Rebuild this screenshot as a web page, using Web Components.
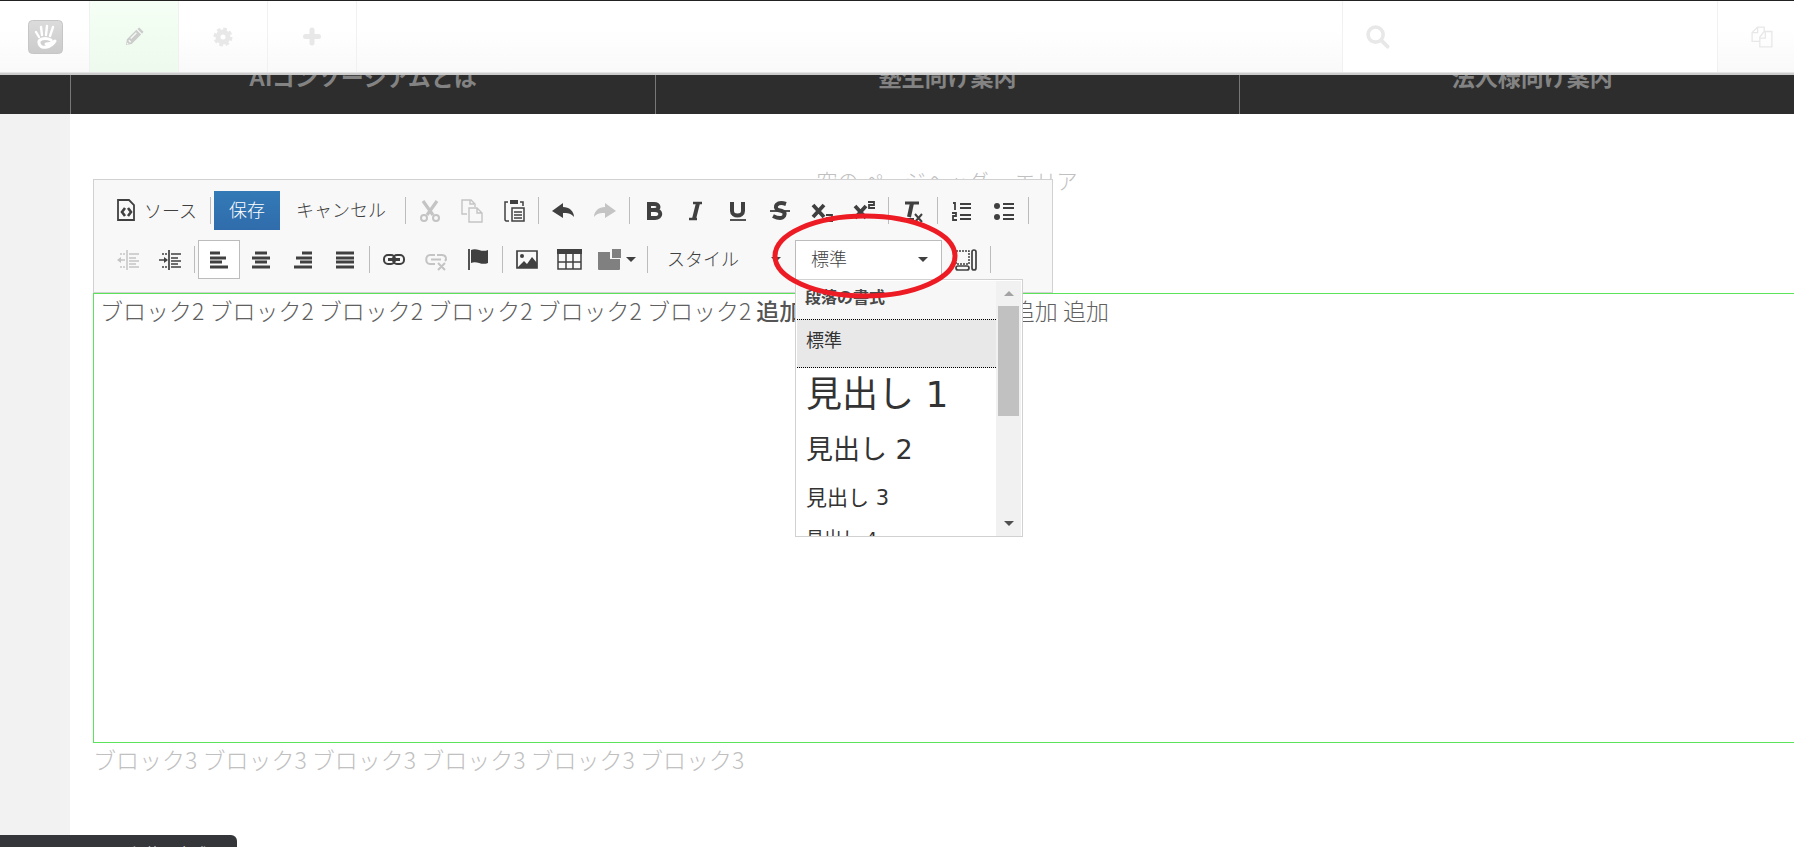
<!DOCTYPE html>
<html lang="ja">

<head>
    <meta charset="utf-8">
    <title>ページ編集</title>
    <meta name="viewport" content="width=device-width, initial-scale=1">
    <style>
        body {
            margin: 0;
            min-height: 100vh;
            overflow: hidden;
            background: linear-gradient(90deg, #f2f2f2 70px, #fff 70px);
            font: 18px/24px "Liberation Sans", "Noto Sans CJK JP", sans-serif;
            color: #484848;
        }
    </style>
</head>

<body>
    <script>
        const icons = {
            pencil: `<path fill="currentColor" d="M1 19l1-6L12 3l5 5L7 18zM13 2l2-1.500 4.500 4.500L18 7z"/><path d="M4 14l2 2M6 12l6-6" stroke="#f1fbf0" stroke-width="1.500"/><path d="M2 16l2 2-2 .5z" fill="#f1fbf0"/>`,
            gear: `<circle cx="10" cy="10" r="5" fill="none" stroke="currentColor" stroke-width="5"/><circle cx="10" cy="10" r="8" fill="none" stroke="currentColor" stroke-width="3" stroke-dasharray="3.600 2.683"/>`,
            plus: `<path d="M10 3v13M3.500 9.500h13" stroke="currentColor" stroke-width="5" stroke-linecap="round"/>`,
            search: `<circle cx="8" cy="8" r="6.300" fill="none" stroke="currentColor" stroke-width="3"/><path d="M13 13l5 5" stroke="currentColor" stroke-width="3.200" stroke-linecap="round"/>`,
            pages: `<path fill="none" stroke="currentColor" stroke-width="1.200" d="M8 14H1V6l5-5h6v4M1 6h5V1M8 19V10l4-5h7v14zM8 11h5V5"/>`,
            source: `<path fill="none" stroke="currentColor" stroke-width="1.800" d="M2 1h11l5 5v15H2z"/><path fill="none" stroke="currentColor" stroke-width="2.600" d="M9 9l-3 4 3 4M12 9l3 4-3 4"/>`,
            cut: `<path stroke="currentColor" stroke-width="3.200" d="M4 1l10 14M18 1L8 15"/><g fill="none" stroke="currentColor" stroke-width="2"><circle cx="5" cy="18" r="3"/><circle cx="17" cy="18" r="3"/></g>`,
            copy: `<path fill="none" stroke="currentColor" stroke-width="1.400" d="M6 14H1V0h9l4 4v3M9 0v4h4M8 8h8l5 5v9H8zM16 8v5h5"/>`,
            paste: `<path d="M7 0h8v4H7z" fill="currentColor"/><path fill="none" stroke="currentColor" stroke-width="1.500" d="M5 2H2v18l1 1h3M17 2h3v4M9 8h12v13H9z"/><path d="M11 12h8M11 15h8M11 18h8" stroke="currentColor" stroke-width="1.300"/>`,
            undo: `<path fill="currentColor" d="M0 11L11 3v4c6 0 11 4 11 10-3-4-7-4-11-4v5z"/>`,
            redo: `<path fill="currentColor" d="M22 11L11 3v4C5 7 0 11 0 17c3-4 7-4 11-4v5z"/>`,
            bold: `<path fill="none" stroke="currentColor" stroke-width="4" d="M6 4h5c6 0 6 6 0 6H7h5c7 0 7 8 0 8H6zV4"/>`,
            italic: `<path fill="none" stroke="currentColor" stroke-width="2.500" d="M8 3h9M4 19h8"/><path stroke="currentColor" stroke-width="4" d="M13 3L9 19"/>`,
            underline: `<path fill="none" stroke="currentColor" stroke-width="4" d="M5 2v9c0 6 11 6 11 0V2"/><path d="M3 20h16" stroke="currentColor" stroke-width="1.800"/>`,
            strike: `<path fill="none" stroke="currentColor" stroke-width="4" d="M17 4C8 1 4 7 9 10c5 1 8 2 6 6-2 3-7 2-11 0"/><path d="M1 11h20" stroke="currentColor" stroke-width="1.800"/>`,
            sub: `<path stroke="currentColor" stroke-width="3.800" d="M2 5l11 12M13 5L2 17"/><path fill="none" stroke="currentColor" stroke-width="1.800" d="M15 15h6v3h-5v3h6"/>`,
            sup: `<path stroke="currentColor" stroke-width="3.800" d="M2 6l11 12M13 6L2 18"/><path fill="none" stroke="currentColor" stroke-width="1.800" d="M15 2h6v3h-5v3h6"/>`,
            clear: `<path d="M3 3h14" stroke="currentColor" stroke-width="3"/><path d="M10 3L7 17" stroke="currentColor" stroke-width="4"/><path d="M2 19h10M13 14l7 8M20 14l-7 8" stroke="currentColor" stroke-width="2"/>`,
            ol: `<path fill="none" stroke="currentColor" stroke-width="1.800" d="M2 3h2v7M1 13h4v3H2v4h4M9 4h11M9 8h11M9 15h11M9 19h11"/>`,
            ul: `<circle cx="4" cy="6" r="3" fill="currentColor"/><circle cx="4" cy="17" r="3" fill="currentColor"/><path stroke="currentColor" stroke-width="1.800" d="M10 4h11M10 8h11M10 15h11M10 19h11"/>`,
            outdent: `<path stroke="currentColor" stroke-width="1.500" d="M10 1v20M12 5h10M12 9h7M12 12h10M12 15h7M12 18h10M2 11h6"/><path stroke="currentColor" stroke-width="1.500" stroke-dasharray="2 1" d="M3 5h6M3 18h6"/><path d="M0 11l4-3v6z" fill="currentColor"/>`,
            indent: `<path stroke="currentColor" stroke-width="1.700" d="M10 1v20M12 5h10M12 9h7M12 12h10M12 15h7M12 18h10M0 11h6"/><path stroke="currentColor" stroke-width="1.500" stroke-dasharray="2 1" d="M3 5h6M3 18h6"/><path d="M9 11L5 8v6z" fill="currentColor"/>`,
            left: `<path stroke="currentColor" stroke-width="3" d="M2 4h10M2 9h16M2 13h12M2 18h18"/>`,
            center: `<path stroke="currentColor" stroke-width="3" d="M5 4h12M2 9h18M5 13h12M2 18h18"/>`,
            right: `<path stroke="currentColor" stroke-width="3" d="M10 4h10M4 9h16M8 13h12M2 18h18"/>`,
            justify: `<path stroke="currentColor" stroke-width="3" d="M2 4h18M2 9h18M2 13h18M2 18h18"/>`,
            link: `<g fill="none" stroke="currentColor" stroke-width="2"><rect x="1" y="6" width="11" height="9" rx="4"/><rect x="10" y="6" width="11" height="9" rx="4"/></g><path d="M5 10.500h12" stroke="currentColor" stroke-width="3"/>`,
            unlink: `<path fill="none" stroke="currentColor" stroke-width="2" d="M10 6H5c-5 0-5 9 0 9h5M12 6h5c4 0 5 4 3 6M6 10.500h10M13 14l7 7M20 14l-7 7"/>`,
            flag: `<path d="M2 0v21" stroke="currentColor" stroke-width="1.800"/><path fill="currentColor" d="M4 1c6-3 10 3 17 0v13c-7 3-11-3-17 0z"/>`,
            image: `<path fill="none" stroke="currentColor" stroke-width="1.700" d="M1 2h20v17H1z"/><circle cx="6" cy="7" r="2" fill="currentColor"/><path fill="currentColor" d="M2 18l6-6 3 3 5-7 5 6v5H2z"/>`,
            table: `<path fill="none" stroke="currentColor" stroke-width="1.500" d="M0 1h23v19H0zM0 13h23M8 5v15M15 5v15"/><path d="M-1 0h25v5H-1z" fill="currentColor"/>`,
            blocks: `<path fill="#808080" d="M0 3h12v7h10v10q0 1-1 1H1q-1 0-1-1zM14 0h9v9h-9z"/>`,
            area: `<path fill="none" stroke="currentColor" stroke-width="1.500" stroke-dasharray="2 1" d="M1 2h13v13H1z"/><g fill="none" stroke="currentColor" stroke-width="1.700"><rect x="17" y="1" width="4" height="20" rx="2"/><rect x="1" y="17" width="13" height="4" rx="2"/></g>`
        };
        const arrow = `<svg class="arrow" width="10" height="5" viewBox="0 0 10 5" aria-hidden="true"><path fill="currentColor" d="M0 0h10L5 5z"/></svg>`;

        class BaseElement extends HTMLElement {
            connectedCallback() {
                if (this.shadowRoot) return;
                this.attachShadow({ mode: "open" }).innerHTML = this.render();
            }
        }
        const define = (name, render) => customElements.define(name, class extends BaseElement {
            render() { return render(this); }
        });

        // <ui-icon name="cut" size="22">
        define("ui-icon", el => {
            let size = el.getAttribute("size") || 22;
            let box = el.getAttribute("box") || 22;
            return `<style>:host{display:inline-flex;flex:none}svg{overflow:visible}</style>
                <svg width="${size}" height="${size}" viewBox="0 0 ${box} ${box}" aria-hidden="true">${icons[el.getAttribute("name")]}</svg>`;
        });

        define("tool-button", el => `
            <style>
                :host { display: block }
                button {
                    display: flex; align-items: center; justify-content: center; gap: 6px;
                    box-sizing: border-box; min-width: 42px; height: 39px; padding: 0;
                    border: 1px solid transparent; background: none; color: inherit; font: inherit; white-space: nowrap;
                }
                :host([text]) button { padding: 0 15px 4px }
                :host([source]) button { padding: 0 9px 2px 8px }
                :host([active]) button { background: #fff; border-color: #bcbcbc }
                :host([primary]) button { padding: 0 14px 4px; border: 0; width: 66px; background: linear-gradient(#337ab7, #306cab); color: #fff }
                :host([off]) { color: #c4c4c4 }
                :host([menu]) button { width: 54px }
            </style>
            <button type="button" title="${el.getAttribute("label") || ""}"><slot></slot>${el.hasAttribute("menu") ? arrow : ""}</button>`);

        define("tool-separator", () => `<style>:host{display:block;flex:none;width:1px;height:27px;margin:0 3px;background:#bcbcbc}</style>`);

        define("tool-combo", el => `
            <style>
                :host { display: block; position: relative; width: 144px }
                :host([open]) { width: 147px; margin-right: 3px }
                button {
                    display: flex; align-items: center; justify-content: space-between;
                    box-sizing: border-box; width: 100%; height: 39px; padding: 0 13px 0 15px;
                    border: 1px solid transparent; background: none; color: inherit; font: inherit;
                }
                span { padding-bottom: 4px }
                :host([open]) button { height: 40px; background: #fff; border-color: #bcbcbc }
            </style>
            <button type="button" aria-haspopup="listbox"><span>${el.getAttribute("label")}</span>${arrow}</button>
            <slot></slot>`);

        define("format-panel", () => `
            <style>
                :host {
                    display: flex; position: absolute; z-index: 2; top: 39px; left: 0;
                    box-sizing: border-box; width: 228px; height: 258px; padding: 1px 1px 0;
                    border: 1px solid #d1d1d1; background: #fff; overflow: hidden; color: #333;
                    font-family: "DejaVu Sans", "Noto Sans CJK JP", sans-serif; font-weight: 400;
                }
                .list { flex: 1; min-width: 0; overflow: hidden }
                h2 { margin: 0; padding: 0 8px; height: 38px; background: #f7f7f7; font-size: 16px; line-height: 34px; color: #484848 }
                button { display: block; width: 100%; padding: 0 9px; border: 0; background: none; color: inherit; font: inherit; text-align: left; white-space: nowrap }
                .selected { height: 49px; padding-bottom: 4px; background: #e8e8e8; border: dotted #000; border-width: 1px 0 }
                .h1 { font-size: 36px; line-height: 54px }
                .h2 { font-size: 27px; line-height: 56px }
                .h3 { font-size: 21px; line-height: 40px }
                .h4 { font-size: 18px; line-height: 42px }
                .scroll { display: flex; flex-direction: column; align-items: center; justify-content: space-between; width: 25px; background: #f1f1f1 }
                .scroll i { width: 21px; height: 110px; background: #c1c1c1; margin-bottom: auto }
                .scroll svg { padding: 10px 0; color: #505050 }
                .scroll svg:first-child { transform: rotate(180deg); color: #a3a3a3 }
            </style>
            <div class="list">
                <h2>段落の書式</h2>
                <button class="selected" type="button">標準</button>
                <button class="h1" type="button">見出し 1</button>
                <button class="h2" type="button">見出し 2</button>
                <button class="h3" type="button">見出し 3</button>
                <button class="h4" type="button">見出し 4</button>
            </div>
            <div class="scroll">${arrow}<i></i>${arrow}</div>`);

        // hand-drawn style highlight round the open combo
        define("highlight-ring", () => `
            <style>:host{display:block;position:absolute;z-index:3;left:-23px;top:-27px;pointer-events:none}svg{display:block}</style>
            <svg width="186" height="86" aria-hidden="true"><ellipse cx="93" cy="43" rx="90" ry="40" fill="none" stroke="#ed1c24" stroke-width="5"/></svg>`);

        const btn = (name, label, attrs = "") => `<tool-button label="${label}" ${attrs}><ui-icon name="${name}"></ui-icon></tool-button>`;
        const sep = `<tool-separator></tool-separator>`;

        define("editor-toolbar", () => `
            <style>
                :host {
                    display: flex; flex-direction: column; gap: 10px; position: absolute; left: -1px; bottom: calc(100% + 1px);
                    box-sizing: border-box; width: 960px; padding: 11px 12px 13px 13px;
                    border: 1px solid #d1d1d1; background: #f8f8f8; color: #404040;
                    font: 300 18px/24px "Noto Sans CJK JP", sans-serif;
                }
                .row { display: flex; align-items: center; height: 39px }
            </style>
            <div class="row">
                <tool-button source label="ソース"><ui-icon name="source"></ui-icon>ソース</tool-button>${sep}
                <tool-button primary label="保存">保存</tool-button>
                <tool-button text label="キャンセル">キャンセル</tool-button>${sep}
                ${btn("cut", "切り取り", "off")}${btn("copy", "コピー", "off")}${btn("paste", "貼り付け")}${sep}
                ${btn("undo", "元に戻す")}${btn("redo", "やり直す", "off")}${sep}
                ${btn("bold", "太字")}${btn("italic", "斜体")}${btn("underline", "下線")}${btn("strike", "打ち消し線")}${btn("sub", "下付き")}${btn("sup", "上付き")}${sep}
                ${btn("clear", "書式を解除")}${sep}
                ${btn("ol", "番号付きリスト")}${btn("ul", "番号無しリスト")}${sep}
            </div>
            <div class="row">
                ${btn("outdent", "インデント解除", "off")}${btn("indent", "インデント")}${sep}
                ${btn("left", "左揃え", "active")}${btn("center", "中央揃え")}${btn("right", "右揃え")}${btn("justify", "両端揃え")}${sep}
                ${btn("link", "リンク")}${btn("unlink", "リンクを削除", "off")}${btn("flag", "アンカー")}${sep}
                ${btn("image", "画像")}${btn("table", "表")}${btn("blocks", "スニペット", "menu")}${sep}
                <tool-combo label="スタイル"></tool-combo>
                <tool-combo label="標準" open><format-panel></format-panel><highlight-ring></highlight-ring></tool-combo>
                ${btn("area", "ブロック表示")}${sep}
            </div>`);

        define("editable-block", () => `
            <style>
                :host { display: block; position: relative; box-sizing: border-box; min-height: 450px; padding: 0 6px; border: 1px solid #5be35b; color: #606060 }
            </style>
            <slot name="toolbar"></slot>
            <slot></slot>`);

        define("cms-bar", () => `
            <style>
                :host {
                    display: flex; position: fixed; z-index: 5; top: 0; left: 0; right: -13px; box-sizing: border-box; height: 75px; padding-left: 1px;
                    border-top: 1px solid #222; border-bottom: 2px solid #ccc; box-shadow: inset 0 -1px #e4e4e4;
                    background: linear-gradient(#fff 40%, #f9f9f9); color: #e8e8e8;
                }
                button { display: flex; align-items: center; justify-content: center; box-sizing: border-box; width: 89px; height: 71px; padding: 0; border: 0; border-right: 1px solid #f1f1f1; background: none; color: inherit }
                .edit { background: linear-gradient(#f5fff5, #eefaed); color: #ccc }
                label { display: flex; align-items: center; gap: 12px; box-sizing: border-box; width: 376px; height: 71px; margin-left: auto; padding: 0 23px; border: solid #f1f1f1; border-width: 0 1px; background: #fff }
                input { flex: 1; min-width: 0; border: 0; background: none; font: inherit; outline: 0 }
            </style>
            <button type="button" title="ダッシュボード">
                <svg width="35" height="34" viewBox="0 0 35 34" aria-hidden="true">
                    <defs><linearGradient id="g" x2="0" y2="1"><stop stop-color="#dcdcdc"/><stop offset="1" stop-color="#cbcbcb"/></linearGradient></defs>
                    <rect x=".5" y=".5" width="34" height="33" rx="4" fill="url(#g)" stroke="#c6c6c6"/>
                    <path d="M8 12l3 5M13 7l1 8M19 6l-1 9M25 7l-3 9" stroke="#fff" stroke-width="2.400" stroke-linecap="round"/>
                    <path d="M18 24c3 0 6-1 9-3-4 7-15 9-16 2-1-4 6-6 12-3" fill="none" stroke="#fff" stroke-width="3" stroke-linecap="round" stroke-linejoin="round"/>
                </svg>
            </button>
            <button class="edit" type="button" title="編集"><ui-icon name="pencil" size="19" box="20"></ui-icon></button>
            <button type="button" title="設定"><ui-icon name="gear" size="20" box="20"></ui-icon></button>
            <button type="button" title="追加"><ui-icon name="plus" size="20" box="20"></ui-icon></button>
            <label title="検索"><ui-icon name="search" size="24" box="20"></ui-icon><input type="search" aria-label="検索"></label>
            <button type="button" title="サイトマップ"><ui-icon name="pages" size="22" box="20"></ui-icon></button>`);

        define("site-nav", () => `
            <style>
                :host { display: block; padding-left: 70px; background: #2d2d2d }
                nav { display: grid; grid-template-columns: repeat(3, 1fr); width: calc(100vw - 40px) }
                a {
                    box-sizing: border-box; height: 74px; padding-top: 22px; border-left: 1px solid #777; text-align: center; text-decoration: none;
                    color: #838383; font: bold 23px/32px "Liberation Sans", "Noto Sans CJK JP", sans-serif;
                }
            </style>
            <nav>
                <a href="#about">AIコンソーシアムとは</a>
                <a href="#students">塾生向け案内</a>
                <a href="#business">法人様向け案内</a>
            </nav>`);

        define("page-area", () => `
            <style>
                :host { display: block; font: 300 23px/32px "Noto Sans CJK JP", sans-serif; color: #c0c0c0 }
                .site { padding-top: 40px }
                main { width: calc(100vw - 86px); margin-left: 93px; padding-top: 48px }
                .empty { margin: 0; font-size: 21px; text-align: center; line-height: 36px }
                p { margin: 0; white-space: nowrap }
                editable-block { margin-top: 95px }
                .footer { margin-top: 65px }
                b { font-weight: 500; color: #555 }
            </style>
            <div class="site">
                <site-nav></site-nav>
                <main>
                    <p class="empty">空の ページヘッダー エリア</p>
                    <editable-block>
                        <editor-toolbar slot="toolbar"></editor-toolbar>
                        <p>ブロック2 ブロック2 ブロック2 ブロック2 ブロック2 ブロック2 <b>追加 追加</b> 追加 追加 追加 追加 追加</p>
                    </editable-block>
                    <p>ブロック3 ブロック3 ブロック3 ブロック3 ブロック3 ブロック3</p>
                    <p class="empty footer">空の ページフッター エリア</p>
                </main>
            </div>`);

        // browser link preview, mostly below the window edge
        define("status-bubble", () => `
            <style>
                :host {
                    display: block; position: fixed; z-index: 6; left: 0; bottom: 0; box-sizing: border-box; width: 237px; height: 12px; padding: 8px 12px 0;
                    border-radius: 0 6px 0 0; background: #35363a; color: #bdc1c6; overflow: hidden; white-space: nowrap;
                    font: 16px/22px "Noto Sans", "Noto Sans CJK JP", sans-serif;
                }
            </style>
            javascript:void('段落の書式');`);
    </script>

    <cms-bar></cms-bar>
    <page-area></page-area>
    <status-bubble></status-bubble>
</body>

</html>
